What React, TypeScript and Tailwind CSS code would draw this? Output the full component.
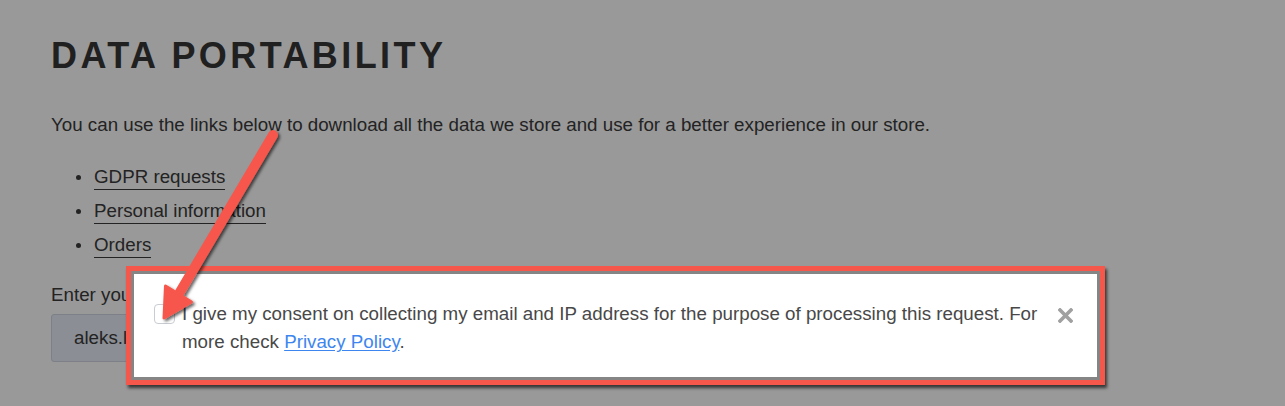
const items = ["GDPR requests", "Personal information", "Orders"];

function Arrow() {
  return (
    <svg
      className="pointer-events-none absolute inset-0"
      width="1285"
      height="406"
      viewBox="0 0 1285 406"
    >
      <defs>
        <filter id="arrowShadow" x="-20%" y="-20%" width="140%" height="140%">
          <feDropShadow dx="2" dy="2" stdDeviation="1.8" floodColor="#000" floodOpacity="0.6" />
        </filter>
      </defs>
      <g filter="url(#arrowShadow)" fill="#f6574b" stroke="#f6574b">
        <line x1="273" y1="135" x2="180" y2="292" strokeWidth="10" strokeLinecap="round" />
        <polygon points="164,318 165.5,286 191.5,302" strokeWidth="3" strokeLinejoin="round" />
      </g>
    </svg>
  );
}

function ConsentPopup() {
  return (
    <div className="absolute left-[126px] top-[266px] h-[119px] w-[979px] border-[5px] border-[#f6574b] shadow-[2px_3px_3px_rgba(0,0,0,0.65)]">
      <div className="flex h-full border-[3px] border-[#858585] bg-white pl-[20px] pr-[24px] pt-[26px]">
        <div className="mt-[4px] h-[20px] w-[21px] shrink-0 rounded-[4px] border-[1.5px] border-[#c9ccd3] bg-white"></div>
        <p className="ml-[7px] flex-1 text-[18.75px] leading-[28px] text-[#484848]">
          I give my consent on collecting my email and IP address for the purpose of processing this request. For
          more check{" "}
          <a href="#" className="text-[#3d86ef] underline underline-offset-2">
            Privacy Policy
          </a>
          .
        </p>
        <div className="ml-[12px] mt-[8px] shrink-0">
          <svg width="15" height="15" viewBox="0 0 15 15">
            <path d="M2 2 L13 13 M13 2 L2 13" stroke="#a0a0a0" strokeWidth="3.6" strokeLinecap="square" />
          </svg>
        </div>
      </div>
    </div>
  );
}

export default function App() {
  return (
    <div className="relative h-[406px] w-full overflow-hidden bg-[#999999] font-['Liberation_Sans',Arial,sans-serif] text-[#232323]">
      <div className="px-[51px] pt-[34px]">
        <h1 className="text-[36px] font-bold leading-[44px] tracking-[0.095em] text-[#202020]">
          DATA PORTABILITY
        </h1>
        <p className="mt-[33px] text-[18.75px] leading-[27px]">
          You can use the links below to download all the data we store and use for a better experience in our store.
        </p>
        <ul className="mt-[26px] flex flex-col gap-[8px] pl-[25px]">
          {items.map((item) => (
            <li key={item} className="flex items-center gap-[13px]">
              <span className="h-[5px] w-[5px] rounded-full bg-[#232323]"></span>
              <a href="#" className="border-b border-[#232323] text-[18.75px] leading-[25px]">
                {item}
              </a>
            </li>
          ))}
        </ul>
        <p className="mt-[24px] text-[18.75px] leading-[25px]">Enter your email address to get the data</p>
        <div className="mt-[7px] flex h-[48px] w-[420px] items-center rounded-[3px] border border-[#7d8087] bg-[#8b8e95] px-[22px] text-[18.75px]">
          aleks.lozano@example.com
        </div>
      </div>
      <ConsentPopup />
      <Arrow />
    </div>
  );
}
